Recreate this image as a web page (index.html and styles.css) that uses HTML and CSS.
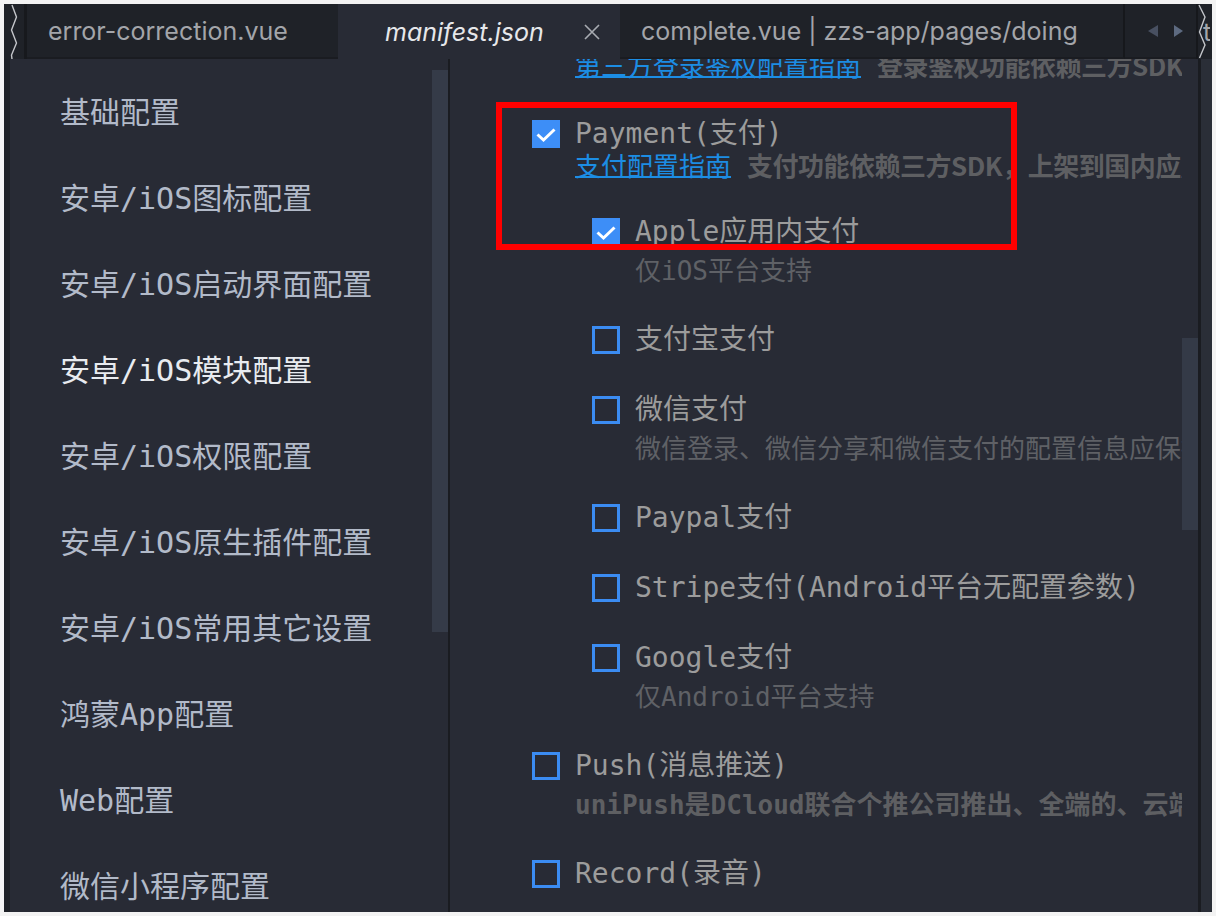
FILE: index.html
```html
<!DOCTYPE html>
<html lang="zh">
<head>
    <meta charset="UTF-8">
    <title>manifest.json</title>
    <link rel="stylesheet" href="styles.css">
</head>
<body>
    <div class="window">
        <div class="tabbar">
            <div class="tab-edge left">
                <svg width="20" height="55" viewBox="0 0 20 55"><polyline points="8,1 12.5,13 7.5,26 12.5,39 7.5,51 8,55" fill="none" stroke="#c4c6ca" stroke-width="1.4"/></svg>
            </div>
            <div class="tab first"><span class="tab-name">error-correction.vue</span></div>
            <div class="tab active">
                <span class="tab-name">manifest.json</span>
                <svg class="tab-close" width="18" height="18" viewBox="0 0 18 18"><path d="M2 2 L16 16 M16 2 L2 16" stroke="#a8abb1" stroke-width="1.6" fill="none"/></svg>
            </div>
            <div class="tab last"><span class="tab-name">complete.vue | zzs-app/pages/doing</span></div>
            <div class="tab-nav">
                <svg width="12" height="14" viewBox="0 0 12 14"><polygon points="11,1 1,7 11,13" fill="#485061"/></svg>
                <svg width="12" height="14" viewBox="0 0 12 14"><polygon points="2,1 11,7 2,13" fill="#5d6a80"/></svg>
            </div>
            <div class="tab-edge right">
                <span class="tab-name">t</span>
                <svg class="edge-zigzag" width="10" height="55" viewBox="0 0 10 55"><polyline points="1,1 7,13 1.5,28 7,41 1.5,54" fill="none" stroke="#c4c6ca" stroke-width="1.4"/></svg>
            </div>
        </div>

        <div class="panes">
            <div class="gutter"></div>

            <aside class="sidebar">
                <ul class="menu">
                    <li>基础配置</li>
                    <li>安卓/iOS图标配置</li>
                    <li>安卓/iOS启动界面配置</li>
                    <li class="current">安卓/iOS模块配置</li>
                    <li>安卓/iOS权限配置</li>
                    <li>安卓/iOS原生插件配置</li>
                    <li>安卓/iOS常用其它设置</li>
                    <li>鸿蒙App配置</li>
                    <li>Web配置</li>
                    <li>微信小程序配置</li>
                </ul>
                <div class="scrollbar"><div class="thumb menu-thumb"></div></div>
            </aside>

            <main class="settings">
                <div class="module-list">
                    <div class="item cut">
                        <div class="desc guide"><a href="#">第三方登录鉴权配置指南</a><b>登录鉴权功能依赖三方SDK，上架到国内应用市场需要在隐私政策中说明</b></div>
                    </div>

                    <div class="item">
                        <label class="row"><span class="box checked"></span><span class="name">Payment(支付)</span></label>
                        <div class="desc guide"><a href="#">支付配置指南</a><b>支付功能依赖三方SDK，上架到国内应用市场需要在隐私政策中说明</b></div>

                        <div class="sub-list">
                            <div class="item">
                                <label class="row"><span class="box checked"></span><span class="name">Apple应用内支付</span></label>
                                <div class="desc">仅iOS平台支持</div>
                            </div>
                            <div class="item">
                                <label class="row"><span class="box"></span><span class="name">支付宝支付</span></label>
                            </div>
                            <div class="item">
                                <label class="row"><span class="box"></span><span class="name">微信支付</span></label>
                                <div class="desc">微信登录、微信分享和微信支付的配置信息应保持一致</div>
                            </div>
                            <div class="item">
                                <label class="row"><span class="box"></span><span class="name">Paypal支付</span></label>
                            </div>
                            <div class="item">
                                <label class="row"><span class="box"></span><span class="name">Stripe支付(Android平台无配置参数)</span></label>
                            </div>
                            <div class="item">
                                <label class="row"><span class="box"></span><span class="name">Google支付</span></label>
                                <div class="desc">仅Android平台支持</div>
                            </div>
                        </div>
                    </div>

                    <div class="item">
                        <label class="row"><span class="box"></span><span class="name">Push(消息推送)</span></label>
                        <div class="desc strong">uniPush是DCloud联合个推公司推出、全端的、云端一体的统一推送服务</div>
                    </div>

                    <div class="item">
                        <label class="row"><span class="box"></span><span class="name">Record(录音)</span></label>
                    </div>
                </div>
                <div class="scrollbar"><div class="thumb list-thumb"></div></div>
            </main>

            <div class="split"></div>
            <div class="next-pane"></div>
        </div>

        <div class="highlight"></div>
    </div>
</body>
</html>
```

FILE: styles.css
```css
/* base */
* {
    margin: 0;
    padding: 0;
    box-sizing: border-box;
}

body {
    background: #f3f3f3;
    font-family: "DejaVu Sans Mono", "Noto Sans CJK SC", monospace;
}

.window {
    position: relative;
    margin: 4px 0 0 4px;
    width: 1208px;
    height: 908px;
    background: #1f2228;
    overflow: hidden;
}

/* tab bar */
.tabbar {
    display: flex;
    height: 55px;
    background: #1f2228;
}

.tab-edge.left {
    width: 20px;
    border-right: 3px solid #17191d;
    box-sizing: content-box;
}

.tab {
    display: flex;
    align-items: center;
    height: 55px;
    padding-left: 21px;
    border-bottom: 2px solid #1a1c21;
    background: #1f2228;
    font-family: "Inter", "Noto Sans", sans-serif;
    font-size: 25px;
    color: #a3a5aa;
    white-space: nowrap;
    overflow: hidden;
}

.tab.first {
    width: 311px;
}

.tab.active {
    width: 282px;
    padding-left: 47px;
    background: #282b35;
    border-bottom: none;
    color: #e6e7ea;
    font-style: italic;
}

.tab-close {
    margin-left: 39px;
}

.tab.last {
    width: 505px;
    border-right: 2px solid #16181c;
}

.tab-nav {
    display: flex;
    align-items: center;
    gap: 13px;
    width: 71px;
    padding-left: 22px;
    border-bottom: 2px solid #1a1c21;
}

.tab-edge.right {
    position: relative;
    width: 14px;
    border-left: 2px solid #16181c;
    display: flex;
    align-items: center;
    padding-left: 5px;
    font-family: "Inter", "Noto Sans", sans-serif;
    font-size: 25px;
    color: #a3a5aa;
    overflow: hidden;
}

.edge-zigzag {
    position: absolute;
    left: 0;
    top: 0;
}

/* panes */
.panes {
    display: flex;
    height: 853px;
}

.gutter {
    width: 6px;
    background: #1e2127;
}

.sidebar {
    display: flex;
    width: 438px;
    background: #282b35;
    border-right: 2px solid #1a1c21;
    box-sizing: content-box;
    overflow: hidden;
}

.menu {
    flex: 1;
    list-style: none;
    padding: 11px 0 0 50px;
}

.menu li {
    height: 86px;
    line-height: 86px;
    font-size: 30px;
    color: #b2bac9;
    white-space: nowrap;
}

.menu li.current {
    color: #e8ebf0;
}

.scrollbar {
    width: 16px;
    flex: 0 0 16px;
}

.thumb {
    width: 16px;
    background: #353b48;
}

.menu-thumb {
    margin-top: 11px;
    height: 562px;
}

.list-thumb {
    margin-top: 279px;
    height: 192px;
    background: #343a47;
}

/* module list */
.settings {
    display: flex;
    width: 748px;
    background: #282b35;
}

.module-list {
    flex: 1;
    padding-left: 82px;
    overflow: hidden;
    white-space: nowrap;
}

.item {
    margin-bottom: 42px;
}

.item.cut {
    margin-top: -8px;
    margin-bottom: 41px;
}

.row {
    display: flex;
    align-items: center;
    height: 28px;
}

.box {
    flex: 0 0 28px;
    width: 28px;
    height: 28px;
    border: 3px solid #3b8cf2;
}

.box.checked {
    border: none;
    background: #3d8ef7 url("data:image/svg+xml,%3Csvg xmlns='http://www.w3.org/2000/svg' width='28' height='28'%3E%3Cpolyline points='5.5,14.5 11.5,20 22.5,9.5' fill='none' stroke='white' stroke-width='3'/%3E%3C/svg%3E") no-repeat;
}

.name {
    margin-left: 15px;
    font-size: 28px;
    line-height: 28px;
    color: #9c9c9c;
}

.desc {
    height: 27px;
    margin-top: 11px;
    margin-left: 43px;
    font-size: 26px;
    line-height: 28px;
    color: #5f6166;
}

.desc.guide {
    height: 28px;
    margin-top: 3px;
}

.item.cut .desc {
    margin-top: 0;
}

.desc a {
    color: #1c8de4;
    text-decoration: underline;
    text-underline-offset: 0;
}

.desc b {
    margin-left: 16px;
    font-family: "Noto Sans CJK SC", sans-serif;
    font-weight: 700;
    letter-spacing: -0.5px;
    color: #5e5f62;
}

.desc.strong {
    font-weight: 700;
    color: #5e5f62;
}

.sub-list {
    margin-top: 39px;
    padding-left: 60px;
}

.split {
    width: 3px;
    background: #1a1c21;
}

.next-pane {
    width: 11px;
    background: #2a2e37;
}

/* red annotation frame */
.highlight {
    position: absolute;
    left: 492px;
    top: 98px;
    width: 521px;
    height: 148px;
    border: 6px solid #ff0000;
}
```
